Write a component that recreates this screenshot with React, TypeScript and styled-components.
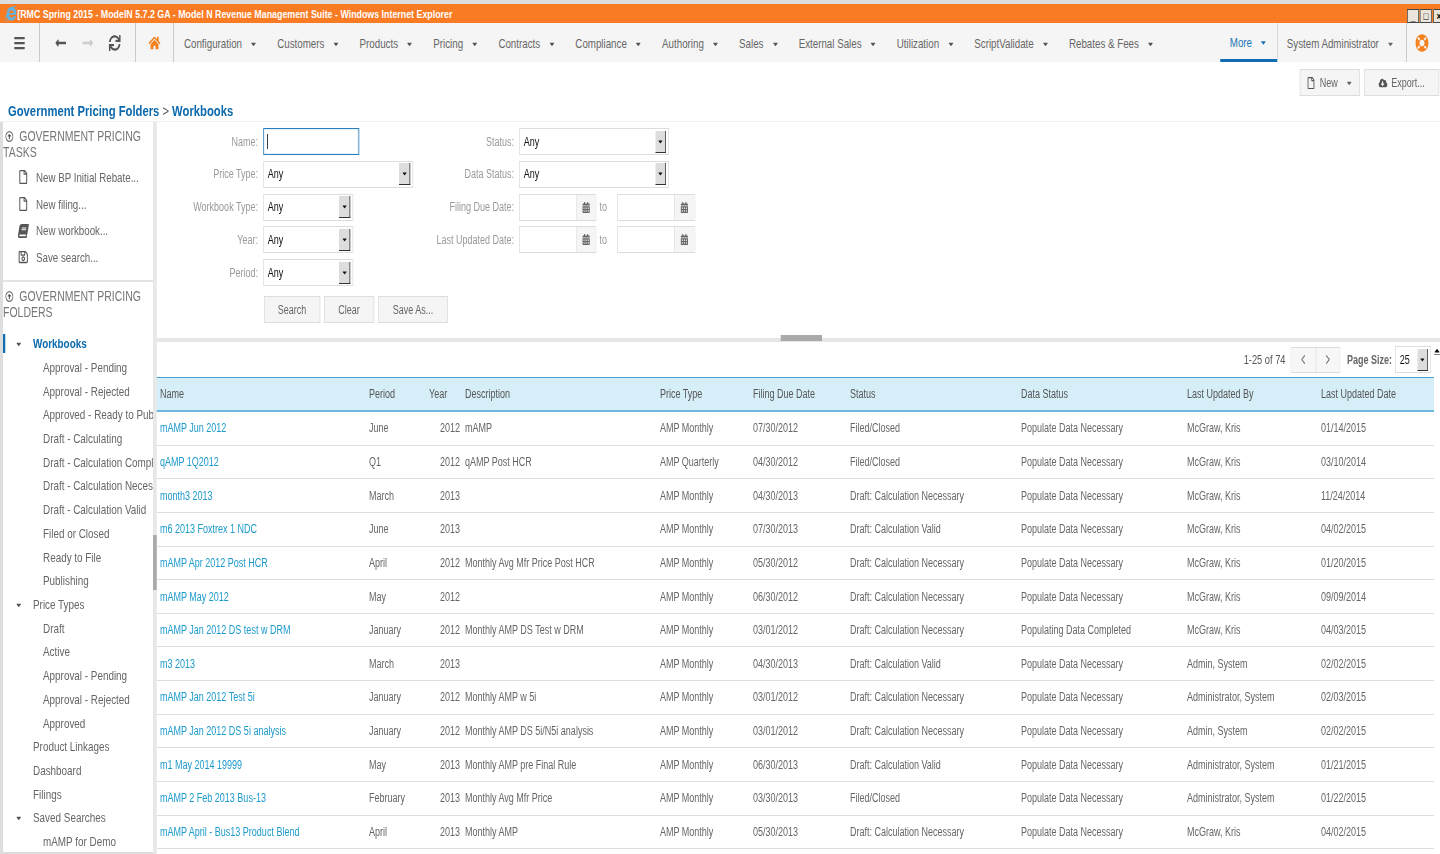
import styled, { createGlobalStyle } from "styled-components";
import {
  FaBars,
  FaBook,
  FaCalendarAlt,
  FaCaretDown,
  FaCaretUp,
  FaCloudDownloadAlt,
  FaHome,
  FaInternetExplorer,
  FaLifeRing,
  FaLongArrowAltLeft,
  FaLongArrowAltRight,
  FaRegArrowAltCircleUp,
  FaRegFile,
  FaRegSave,
  FaSync,
} from "react-icons/fa";
import { FiChevronLeft, FiChevronRight } from "react-icons/fi";

// the whole page is squeezed horizontally, so every width goes through x()
const SQUEEZE = 0.75;
const x = (n: number) => `${n / SQUEEZE}px`;

const GlobalStyle = createGlobalStyle`
  html, body {
    margin: 0;
    height: 100%;
    overflow: hidden;
    background: #fff;
  }
  body {
    font-family: "Liberation Sans", Arial, sans-serif;
    font-size: 12px;
    color: #666;
  }
  * {
    box-sizing: border-box;
  }
`;

const Page = styled.div`
  width: ${x(1440)};
  height: 854px;
  display: flex;
  flex-direction: column;
  overflow: hidden;
  transform: scaleX(${SQUEEZE});
  transform-origin: 0 0;
`;

const TitleBar = styled.div`
  height: 23px;
  flex: none;
  border-top: 4px solid #ddd;
  background: #f97b24;
  display: flex;
  align-items: center;
  padding-left: ${x(5)};
  color: #fff;
  font-size: 11.8px;
  font-weight: 700;
  white-space: nowrap;

  .ie {
    color: #5db4e8;
    font-size: 15px;
    margin-right: ${x(1)};
    flex: none;
  }
`;

const WindowButtons = styled.div`
  margin-left: auto;
  align-self: flex-end;
  display: flex;
  gap: ${x(1)};
  height: 14px;
  width: ${x(33)};
  overflow: hidden;
  flex: none;
`;

const WindowButton = styled.span`
  width: ${x(12)};
  flex: none;
  background: #e9e5da;
  border: 1px solid #444;
  display: flex;
  align-items: center;
  justify-content: center;
  color: #000;
  font-size: 11px;
  line-height: 1;
`;

const NavBar = styled.nav`
  height: 39px;
  flex: none;
  background: #f5f5f5;
  display: flex;
  align-items: stretch;
  font-size: 13px;
  white-space: nowrap;
`;

const NavTools = styled.div<{ $width: number; $gap?: number }>`
  width: ${(p) => x(p.$width)};
  flex: none;
  display: flex;
  align-items: center;
  justify-content: center;
  gap: ${(p) => x(p.$gap ?? 0)};
  border-right: ${x(1)} solid #bbb;
  color: #555;
  font-size: 16px;
`;

const NavMenu = styled.div`
  display: flex;
  align-items: center;
  padding: 2px 0 0 ${x(10)};
  flex: 1;
  min-width: 0;
`;

const NavItem = styled.div`
  display: flex;
  align-items: center;
  gap: ${x(8)};
  margin-right: ${x(19.75)};
  color: #666;

  svg {
    font-size: 10px;
    color: #555;
  }
`;

const ActiveNavItem = styled.div`
  width: ${x(57)};
  flex: none;
  display: flex;
  align-items: center;
  justify-content: center;
  gap: ${x(7)};
  color: #1d76b5;
  border-bottom: 3px solid #0f6db3;
  padding-top: 3px;

  svg {
    font-size: 11px;
  }
`;

const UserMenu = styled.div`
  width: ${x(130)};
  flex: none;
  display: flex;
  align-items: center;
  gap: ${x(8)};
  padding: 2px 0 0 ${x(9)};
  border-left: ${x(1)} solid #ccc;
  border-right: ${x(1)} solid #bbb;
  color: #666;

  svg {
    font-size: 10px;
  }
`;

const HelpIcon = styled.div`
  width: ${x(33)};
  flex: none;
  display: flex;
  align-items: center;
  padding-left: ${x(8)};
  color: #f58220;
  font-size: 18px;
`;

const ActionRow = styled.div`
  height: 40px;
  flex: none;
  display: flex;
  justify-content: flex-end;
  align-items: flex-start;
  gap: ${x(4)};
  padding-top: 7px;
  padding-right: ${x(1)};
`;

const Button = styled.button<{ $width: number }>`
  width: ${(p) => x(p.$width)};
  height: 27px;
  display: flex;
  align-items: center;
  justify-content: center;
  gap: ${x(4)};
  border: 1px solid #ddd;
  background: #f5f5f5;
  color: #666;
  font: inherit;
  font-size: 12px;
  padding: 0;
  svg {
    flex: none;
  }
`;

const ButtonCaret = styled.span`
  display: flex;
  margin-left: ${x(4)};
  font-size: 10px;
`;

const Breadcrumb = styled.div`
  height: 20px;
  flex: none;
  padding-left: ${x(8)};
  line-height: 18px;
  font-size: 15px;
  font-weight: 700;
  color: #0b69ad;
  border-bottom: 1px solid #f0f0f0;

  span {
    font-weight: 400;
    color: #555;
  }
`;

const Body = styled.div`
  flex: 1;
  min-height: 0;
  display: flex;
`;

const Sidebar = styled.aside`
  width: ${x(157)};
  flex: none;
  display: flex;
  border-left: ${x(3)} solid #ddd;
`;

const SideContent = styled.div`
  flex: 1;
  min-width: 0;
  overflow: hidden;
  white-space: nowrap;
  border-bottom: 2px solid #ddd;
`;

const ScrollTrack = styled.div`
  position: relative;
  width: ${x(4)};
  flex: none;
  background: #e8e8e8;
`;

const ScrollThumb = styled.div`
  position: absolute;
  left: 0;
  right: 0;
  top: 413px;
  height: 55px;
  background: #aaa;
`;

const SectionHeading = styled.div`
  font-size: 14px;
  line-height: 16px;
  color: #777;
  white-space: normal;
  padding-top: 6px;
  text-indent: ${x(2)};

  svg {
    font-size: 11px;
    margin-right: ${x(6)};
    color: #555;
    vertical-align: -1px;
  }
`;

const TaskList = styled.div`
  padding: 4px 0 9px;
  border-bottom: 2px solid #e4e4e4;
`;

const TaskItem = styled.div`
  height: 26.7px;
  display: flex;
  align-items: center;
  padding-left: ${x(14)};
  font-size: 13px;
  color: #666;

  svg {
    width: ${x(12)};
    margin-right: ${x(7)};
    font-size: 14px;
    color: #555;
    flex: none;
  }
`;

const SlantedBook = styled(FaBook)`
  transform: skewX(-12deg);
`;

const Tree = styled.div`
  margin-top: 12px;
`;

const TreeRow = styled.div<{ $level: number; $active?: boolean }>`
  position: relative;
  height: 23.72px;
  display: flex;
  align-items: center;
  padding-left: ${(p) => x(p.$level === 2 ? 40 : 30)};
  font-size: 13.2px;
  font-weight: ${(p) => (p.$active ? 700 : 400)};
  color: ${(p) => (p.$active ? "#0b69ad" : "#666")};

  ${(p) =>
    p.$active &&
    `&::before {
      content: "";
      position: absolute;
      left: 0;
      top: 2px;
      bottom: 2px;
      width: ${x(2)};
      background: #0f6db3;
    }`}

  svg {
    position: absolute;
    left: ${x(12)};
    font-size: 10px;
    color: #555;
  }
`;

const Main = styled.main`
  position: relative;
  flex: 1;
  min-width: 0;
  display: flex;
  flex-direction: column;
`;

const SearchPanel = styled.section`
  position: relative;
  height: 220px;
  flex: none;
  border-bottom: 4px solid #e6e6e6;
  padding-top: 6px;
`;

const SplitHandle = styled.div`
  position: absolute;
  left: ${x(624)};
  bottom: -3px;
  width: ${x(41)};
  height: 6px;
  background: #aaa;
`;

const FormColumns = styled.div`
  display: flex;
  height: 168px;
`;

const FormColumn = styled.div<{ $labelWidth: number; $width: number }>`
  width: ${(p) => x(p.$width)};
  flex: none;
  display: flex;
  flex-direction: column;
  gap: 5.8px;
  label {
    width: ${(p) => x(p.$labelWidth)};
  }
`;

const FieldRow = styled.div`
  height: 27px;
  display: flex;
  align-items: center;
  gap: ${x(5)};
`;

const FieldLabel = styled.label`
  flex: none;
  text-align: right;
  color: #999;
  font-size: 12px;
  white-space: nowrap;
`;

const NameInput = styled.div`
  width: ${x(96)};
  height: 27px;
  border: 1px solid #2b7fbd;
  box-shadow: inset 0 0 2px #9cc7e4;
  padding: 5px ${x(3)};

  &::before {
    content: "";
    display: block;
    width: 1px;
    height: 15px;
    background: #000;
  }
`;

const SelectBox = styled.div<{ $width: number }>`
  width: ${(p) => x(p.$width)};
  height: 27px;
  flex: none;
  border: 1px solid #ddd;
  display: flex;
  align-items: center;
  justify-content: space-between;
  padding: 2px ${x(2)} 2px ${x(4)};
  color: #111;
  font-size: 12px;
`;

const SelectArrow = styled.span`
  width: ${x(11)};
  height: 22px;
  flex: none;
  background: #ddd;
  border-right: ${x(1)} solid #333;
  border-bottom: 1px solid #333;
  display: flex;
  align-items: center;
  justify-content: center;
  color: #111;
  font-size: 9px;
`;

const DateBox = styled.div`
  height: 27px;
  flex: none;
  display: flex;
  border: 1px solid #ddd;
`;

const DateInput = styled.div`
  width: ${x(57)};
  border-right: 1px solid #ddd;
`;

const DateButton = styled.div`
  width: ${x(19)};
  display: flex;
  align-items: center;
  justify-content: center;
  background: #f5f5f5;
  color: #666;
  font-size: 11px;
`;

const ToLabel = styled.span`
  width: ${x(21)};
  flex: none;
  color: #999;
  padding-left: ${x(3)};
`;

const DateRange = styled.div`
  display: flex;
  align-items: center;
`;

const FormButtons = styled.div`
  display: flex;
  gap: ${x(4)};
  padding-left: ${x(107)};
`;

const Pager = styled.div`
  height: 35px;
  flex: none;
  display: flex;
  align-items: center;
  justify-content: flex-end;
  padding-right: ${x(9)};
  color: #555;
  font-size: 12.4px;
  white-space: nowrap;
`;

const PagerButtons = styled.div`
  display: flex;
  margin: 0 ${x(7)} 0 ${x(5)};
  border: 1px solid #ddd;
  height: 26px;
`;

const PagerButton = styled.div`
  width: ${x(24)};
  display: flex;
  align-items: center;
  justify-content: center;
  background: #f7f7f7;
  color: #777;
  font-size: 15px;

  & + & {
    border-left: 1px solid #ddd;
  }
`;

const PageSize = styled.span`
  font-weight: 700;
  font-size: 12px;
  color: #666;
  margin-right: ${x(3)};
`;

const ScrollUp = styled.div`
  position: absolute;
  right: 0;
  top: 224px;
  width: ${x(6)};
  height: 9px;
  display: flex;
  align-items: center;
  justify-content: center;
  color: #111;
  font-size: 11px;
  border-bottom: 1px solid #888;
`;

const TableArea = styled.div`
  width: ${x(1277)};
`;

const columns = [209, 60, 36, 195, 93, 97, 171, 166, 134, 113].map(x).join(" ");

const HeaderRow = styled.div`
  display: grid;
  grid-template-columns: ${columns};
  align-items: center;
  height: 35px;
  padding-left: ${x(3)};
  background: #d6eef8;
  border-top: 1px solid #4aa3cc;
  border-bottom: 2px solid #6cb8dc;
  color: #555;
`;

const DataRow = styled.div`
  display: grid;
  grid-template-columns: ${columns};
  align-items: center;
  height: 33.65px;
  padding-left: ${x(3)};
  border-bottom: 1px solid #ddd;
  color: #666;
  white-space: nowrap;
`;

const NameLink = styled.a`
  color: #1c9acb;
`;

const YearCell = styled.span`
  text-align: right;
  padding-right: ${x(5)};
`;

interface Workbook {
  name: string;
  period: string;
  year: string;
  description: string;
  priceType: string;
  due: string;
  status: string;
  dataStatus: string;
  updatedBy: string;
  updated: string;
}

const populate = "Populate Data Necessary";
const necessary = "Draft: Calculation Necessary";
const valid = "Draft: Calculation Valid";
const mcgraw = "McGraw, Kris";
const adminSys = "Administrator, System";

const workbooks: Workbook[] = [
  { name: "mAMP Jun 2012", period: "June", year: "2012", description: "mAMP", priceType: "AMP Monthly", due: "07/30/2012", status: "Filed/Closed", dataStatus: populate, updatedBy: mcgraw, updated: "01/14/2015" },
  { name: "qAMP 1Q2012", period: "Q1", year: "2012", description: "qAMP Post HCR", priceType: "AMP Quarterly", due: "04/30/2012", status: "Filed/Closed", dataStatus: populate, updatedBy: mcgraw, updated: "03/10/2014" },
  { name: "month3 2013", period: "March", year: "2013", description: "", priceType: "AMP Monthly", due: "04/30/2013", status: necessary, dataStatus: populate, updatedBy: mcgraw, updated: "11/24/2014" },
  { name: "m6 2013 Foxtrex 1 NDC", period: "June", year: "2013", description: "", priceType: "AMP Monthly", due: "07/30/2013", status: valid, dataStatus: populate, updatedBy: mcgraw, updated: "04/02/2015" },
  { name: "mAMP Apr 2012 Post HCR", period: "April", year: "2012", description: "Monthly Avg Mfr Price Post HCR", priceType: "AMP Monthly", due: "05/30/2012", status: necessary, dataStatus: populate, updatedBy: mcgraw, updated: "01/20/2015" },
  { name: "mAMP May 2012", period: "May", year: "2012", description: "", priceType: "AMP Monthly", due: "06/30/2012", status: necessary, dataStatus: populate, updatedBy: mcgraw, updated: "09/09/2014" },
  { name: "mAMP Jan 2012 DS test w DRM", period: "January", year: "2012", description: "Monthly AMP DS Test w DRM", priceType: "AMP Monthly", due: "03/01/2012", status: necessary, dataStatus: "Populating Data Completed", updatedBy: mcgraw, updated: "04/03/2015" },
  { name: "m3 2013", period: "March", year: "2013", description: "", priceType: "AMP Monthly", due: "04/30/2013", status: valid, dataStatus: populate, updatedBy: "Admin, System", updated: "02/02/2015" },
  { name: "mAMP Jan 2012 Test 5i", period: "January", year: "2012", description: "Monthly AMP w 5i", priceType: "AMP Monthly", due: "03/01/2012", status: necessary, dataStatus: populate, updatedBy: adminSys, updated: "02/03/2015" },
  { name: "mAMP Jan 2012 DS 5i analysis", period: "January", year: "2012", description: "Monthly AMP DS 5i/N5i analysis", priceType: "AMP Monthly", due: "03/01/2012", status: necessary, dataStatus: populate, updatedBy: "Admin, System", updated: "02/02/2015" },
  { name: "m1 May 2014 19999", period: "May", year: "2013", description: "Monthly AMP pre Final Rule", priceType: "AMP Monthly", due: "06/30/2013", status: valid, dataStatus: populate, updatedBy: adminSys, updated: "01/21/2015" },
  { name: "mAMP 2 Feb 2013 Bus-13", period: "February", year: "2013", description: "Monthly Avg Mfr Price", priceType: "AMP Monthly", due: "03/30/2013", status: "Filed/Closed", dataStatus: populate, updatedBy: adminSys, updated: "01/22/2015" },
  { name: "mAMP April - Bus13 Product Blend", period: "April", year: "2013", description: "Monthly AMP", priceType: "AMP Monthly", due: "05/30/2013", status: necessary, dataStatus: populate, updatedBy: mcgraw, updated: "04/02/2015" },
];

const menus = [
  "Configuration",
  "Customers",
  "Products",
  "Pricing",
  "Contracts",
  "Compliance",
  "Authoring",
  "Sales",
  "External Sales",
  "Utilization",
  "ScriptValidate",
  "Rebates & Fees",
];

const tree: { label: string; level: number; open?: boolean; active?: boolean }[] = [
  { label: "Workbooks", level: 1, open: true, active: true },
  { label: "Approval - Pending", level: 2 },
  { label: "Approval - Rejected", level: 2 },
  { label: "Approved - Ready to Publish", level: 2 },
  { label: "Draft - Calculating", level: 2 },
  { label: "Draft - Calculation Complete", level: 2 },
  { label: "Draft - Calculation Necessary", level: 2 },
  { label: "Draft - Calculation Valid", level: 2 },
  { label: "Filed or Closed", level: 2 },
  { label: "Ready to File", level: 2 },
  { label: "Publishing", level: 2 },
  { label: "Price Types", level: 1, open: true },
  { label: "Draft", level: 2 },
  { label: "Active", level: 2 },
  { label: "Approval - Pending", level: 2 },
  { label: "Approval - Rejected", level: 2 },
  { label: "Approved", level: 2 },
  { label: "Product Linkages", level: 1 },
  { label: "Dashboard", level: 1 },
  { label: "Filings", level: 1 },
  { label: "Saved Searches", level: 1, open: true },
  { label: "mAMP for Demo", level: 2 },
];

const Select = ({ width, value = "Any" }: { width: number; value?: string }) => (
  <SelectBox $width={width}>
    {value}
    <SelectArrow>
      <FaCaretDown />
    </SelectArrow>
  </SelectBox>
);

const DatePick = () => (
  <DateBox>
    <DateInput />
    <DateButton>
      <FaCalendarAlt />
    </DateButton>
  </DateBox>
);

const App = () => {
  return (
    <Page>
      <GlobalStyle />
      <TitleBar>
        <FaInternetExplorer className="ie" />
        [RMC Spring 2015 - ModelN 5.7.2 GA - Model N Revenue Management Suite - Windows Internet Explorer
        <WindowButtons>
          <WindowButton>_</WindowButton>
          <WindowButton>□</WindowButton>
          <WindowButton>×</WindowButton>
        </WindowButtons>
      </TitleBar>

      <NavBar>
        <NavTools $width={40}>
          <FaBars />
        </NavTools>
        <NavTools $width={96} $gap={15}>
          <FaLongArrowAltLeft />
          <FaLongArrowAltRight color="#ccc" />
          <FaSync />
        </NavTools>
        <NavTools $width={38}>
          <FaHome color="#f58220" />
        </NavTools>
        <NavMenu>
          {menus.map((m) => (
            <NavItem key={m}>
              {m}
              <FaCaretDown />
            </NavItem>
          ))}
        </NavMenu>
        <ActiveNavItem>
          More
          <FaCaretDown />
        </ActiveNavItem>
        <UserMenu>
          System Administrator
          <FaCaretDown />
        </UserMenu>
        <HelpIcon>
          <FaLifeRing />
        </HelpIcon>
      </NavBar>

      <ActionRow>
        <Button $width={60}>
          <FaRegFile color="#555" />
          New
          <ButtonCaret>
            <FaCaretDown />
          </ButtonCaret>
        </Button>
        <Button $width={75}>
          <FaCloudDownloadAlt color="#555" />
          Export...
        </Button>
      </ActionRow>

      <Breadcrumb>
        Government Pricing Folders <span>&gt;</span> Workbooks
      </Breadcrumb>

      <Body>
        <Sidebar>
          <SideContent>
            <SectionHeading>
              <FaRegArrowAltCircleUp />
              GOVERNMENT PRICING TASKS
            </SectionHeading>
            <TaskList>
              <TaskItem>
                <FaRegFile />
                New BP Initial Rebate...
              </TaskItem>
              <TaskItem>
                <FaRegFile />
                New filing...
              </TaskItem>
              <TaskItem>
                <SlantedBook />
                New workbook...
              </TaskItem>
              <TaskItem>
                <FaRegSave />
                Save search...
              </TaskItem>
            </TaskList>
            <SectionHeading>
              <FaRegArrowAltCircleUp />
              GOVERNMENT PRICING FOLDERS
            </SectionHeading>
            <Tree>
              {tree.map((t, i) => (
                <TreeRow key={i} $level={t.level} $active={t.active}>
                  {t.open && <FaCaretDown />}
                  {t.label}
                </TreeRow>
              ))}
            </Tree>
          </SideContent>
          <ScrollTrack>
            <ScrollThumb />
          </ScrollTrack>
        </Sidebar>

        <Main>
          <SearchPanel>
            <FormColumns>
              <FormColumn $width={262} $labelWidth={101}>
                <FieldRow>
                  <FieldLabel>Name:</FieldLabel>
                  <NameInput />
                </FieldRow>
                <FieldRow>
                  <FieldLabel>Price Type:</FieldLabel>
                  <Select width={150} />
                </FieldRow>
                <FieldRow>
                  <FieldLabel>Workbook Type:</FieldLabel>
                  <Select width={90} />
                </FieldRow>
                <FieldRow>
                  <FieldLabel>Year:</FieldLabel>
                  <Select width={90} />
                </FieldRow>
                <FieldRow>
                  <FieldLabel>Period:</FieldLabel>
                  <Select width={90} />
                </FieldRow>
              </FormColumn>
              <FormColumn $width={300} $labelWidth={95}>
                <FieldRow>
                  <FieldLabel>Status:</FieldLabel>
                  <Select width={150} />
                </FieldRow>
                <FieldRow>
                  <FieldLabel>Data Status:</FieldLabel>
                  <Select width={150} />
                </FieldRow>
                <FieldRow>
                  <FieldLabel>Filing Due Date:</FieldLabel>
                  <DateRange>
                    <DatePick />
                    <ToLabel>to</ToLabel>
                    <DatePick />
                  </DateRange>
                </FieldRow>
                <FieldRow>
                  <FieldLabel>Last Updated Date:</FieldLabel>
                  <DateRange>
                    <DatePick />
                    <ToLabel>to</ToLabel>
                    <DatePick />
                  </DateRange>
                </FieldRow>
              </FormColumn>
            </FormColumns>
            <FormButtons>
              <Button $width={56}>Search</Button>
              <Button $width={50}>Clear</Button>
              <Button $width={70}>Save As...</Button>
            </FormButtons>
            <SplitHandle />
          </SearchPanel>

          <Pager>
            1-25 of 74
            <PagerButtons>
              <PagerButton>
                <FiChevronLeft />
              </PagerButton>
              <PagerButton>
                <FiChevronRight />
              </PagerButton>
            </PagerButtons>
            <PageSize>Page Size:</PageSize>
            <Select width={36} value="25" />
          </Pager>

          <ScrollUp>
            <FaCaretUp />
          </ScrollUp>

          <TableArea>
            <HeaderRow>
              <span>Name</span>
              <span>Period</span>
              <span>Year</span>
              <span>Description</span>
              <span>Price Type</span>
              <span>Filing Due Date</span>
              <span>Status</span>
              <span>Data Status</span>
              <span>Last Updated By</span>
              <span>Last Updated Date</span>
            </HeaderRow>
            {workbooks.map((w) => (
              <DataRow key={w.name}>
                <NameLink>{w.name}</NameLink>
                <span>{w.period}</span>
                <YearCell>{w.year}</YearCell>
                <span>{w.description}</span>
                <span>{w.priceType}</span>
                <span>{w.due}</span>
                <span>{w.status}</span>
                <span>{w.dataStatus}</span>
                <span>{w.updatedBy}</span>
                <span>{w.updated}</span>
              </DataRow>
            ))}
          </TableArea>
        </Main>
      </Body>
    </Page>
  );
};

export default App;
